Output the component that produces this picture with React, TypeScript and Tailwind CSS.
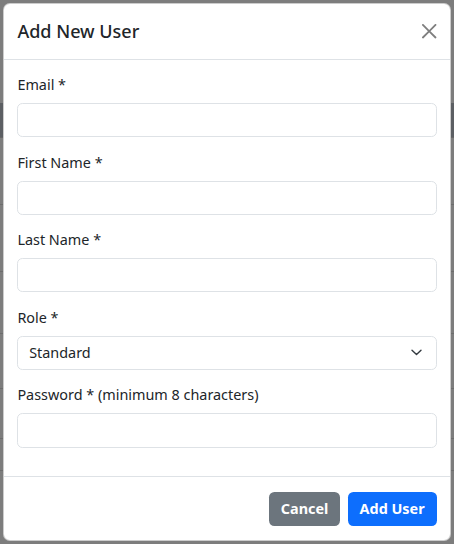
import { ReactNode } from 'react'

const FONT = '"Noto Sans", "Open Sans", "Liberation Sans", sans-serif'

function Field({ label, children }: { label: string; children: ReactNode }) {
  return (
    <div className="mb-[14.4px]">
      <label className="block mb-[7.2px] text-[14.4px] leading-[21.6px] text-[#212529]">{label}</label>
      {children}
    </div>
  )
}

function TextInput({ type = 'text' }: { type?: string }) {
  return (
    <input
      type={type}
      className="block w-full h-[34.4px] px-[10.8px] bg-white border border-[#dee2e6] rounded-[5.4px] text-[14.4px] text-[#212529] outline-none"
    />
  )
}

export default function App() {
  return (
    <div className="relative w-[454px] h-[544px] overflow-hidden bg-[#7d7d7d]" style={{ fontFamily: FONT }}>
      {/* page behind the backdrop */}
      <div className="pt-[103px]">
        <div className="h-[35px] bg-[#5c5f63] border-b border-[#666]" />
        <div className="h-[67px] border-b border-[#6d6d6d]" />
        <div className="h-[67px] border-b border-[#6d6d6d]" />
        <div className="h-[62px] border-b border-[#6d6d6d]" />
        <div className="h-[55px] border-b border-[#6d6d6d]" />
        <div className="h-[50px] border-b border-[#6d6d6d]" />
        <div className="h-[32px] border-b border-[#6d6d6d]" />
      </div>

      {/* modal */}
      <div className="absolute left-[3px] top-[3px] w-[448px] flex flex-col bg-white border border-black/20 rounded-[7px]">
        <div className="flex items-center justify-between px-[13.4px] py-[14px] border-b border-[#dee2e6]">
          <h5 className="text-[18px] leading-[27px] font-medium text-[#212529]">Add New User</h5>
          <button className="w-[14.4px] h-[14.4px] opacity-50" aria-label="Close">
            <svg viewBox="0 0 16 16" className="w-[14.4px] h-[14.4px]" fill="#000">
              <path d="M.293.293a1 1 0 0 1 1.414 0L8 6.586 14.293.293a1 1 0 1 1 1.414 1.414L9.414 8l6.293 6.293a1 1 0 0 1-1.414 1.414L8 9.414l-6.293 6.293a1 1 0 0 1-1.414-1.414L6.586 8 .293 1.707a1 1 0 0 1 0-1.414z" />
            </svg>
          </button>
        </div>

        <div className="px-[13.4px] pt-[14.2px] pb-[14.2px]">
          <Field label="Email *">
            <TextInput type="email" />
          </Field>
          <Field label="First Name *">
            <TextInput />
          </Field>
          <Field label="Last Name *">
            <TextInput />
          </Field>
          <Field label="Role *">
            <div className="relative">
              <div className="flex items-center h-[34.4px] px-[10.8px] border border-[#dee2e6] rounded-[5.4px] text-[14.4px] text-[#212529]">
                Standard
              </div>
              <svg
                viewBox="0 0 11 7"
                className="absolute right-[14.5px] top-[13.5px] w-[11px] h-[7px]"
                fill="none"
                stroke="#343a40"
                strokeWidth="1.4"
                strokeLinecap="round"
                strokeLinejoin="round"
              >
                <path d="M1 1.2 5.5 5.6 10 1.2" />
              </svg>
            </div>
          </Field>
          <Field label="Password * (minimum 8 characters)">
            <TextInput type="password" />
          </Field>
        </div>

        <div className="flex justify-end items-center gap-[7.2px] px-[13.4px] py-[14.4px] border-t border-[#dee2e6]">
          <button className="h-[34px] px-[12px] rounded-[5.4px] bg-[#6c757d] text-white text-[14.4px] font-bold">
            Cancel
          </button>
          <button className="h-[34px] px-[12px] rounded-[5.4px] bg-[#0d6efd] text-white text-[14.4px] font-bold">
            Add User
          </button>
        </div>
      </div>
    </div>
  )
}
